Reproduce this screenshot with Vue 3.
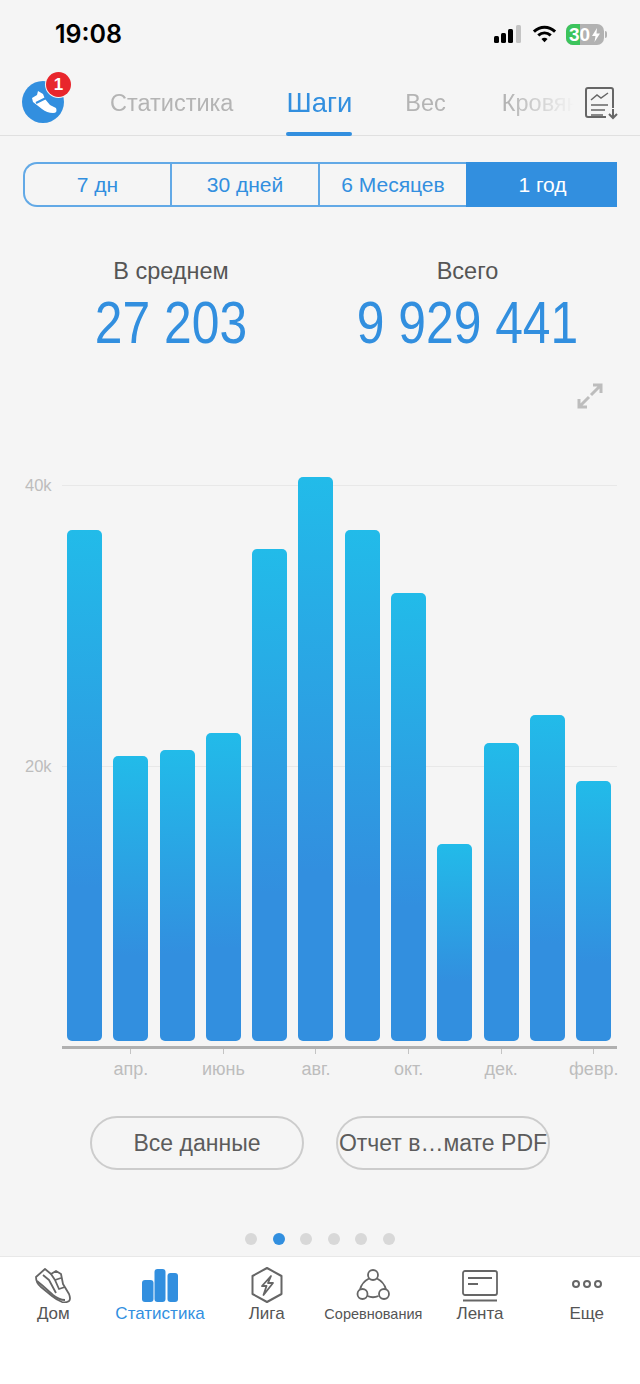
<template>
  <div class="screen">
    <div class="status">
      <span class="time">19:08</span>
      <div class="status-icons">
        <svg width="30" height="20" viewBox="0 0 30 20">
          <rect x="1" y="12" width="5" height="7" rx="1.500" fill="#000" />
          <rect x="8" y="9" width="5" height="10" rx="1.500" fill="#000" />
          <rect x="15" y="5" width="5" height="14" rx="1.500" fill="#000" />
          <rect x="23" y="1" width="5" height="18" rx="1.500" fill="#c4c4c4" />
        </svg>
        <svg width="25" height="20" viewBox="0 0 26 20" fill="none" stroke="#000" stroke-width="3.200">
          <path d="M2 7.500C8.500 1.500 17.500 1.500 24 7.500" />
          <path d="M6.500 11.500C10.500 8 15.500 8 19.500 11.500" />
          <path d="M13 18.500L9.800 15.200C11.800 13.600 14.200 13.600 16.200 15.200Z" fill="#000" stroke="none" />
        </svg>
        <div class="battery-wrap">
          <div class="battery">
            <div class="battery-fill"></div>
            <span class="battery-num">30</span>
            <svg class="bolt" width="10" height="16" viewBox="0 0 10 16"><path d="M6 1L1 9h3.500L3.500 15 9 6.500H5.500Z" fill="#fff" /></svg>
          </div>
          <i class="battery-nub"></i>
        </div>
      </div>
    </div>

    <div class="header">
      <div class="avatar">
        <svg width="44" height="46" viewBox="0 0 44 46">
          <circle cx="21" cy="25" r="21" fill="#328fdf" />
          <path d="M10 21l5-3 1-4 5 3 2 5 5 6 6 3q2 5-3 5-6 0-11-4l-9-7z" fill="#fff" />
          <path d="M14 26l10-5" stroke="#328fdf" stroke-width="2" fill="none" />
        </svg>
        <span class="badge">1</span>
      </div>
      <div class="tabs">
        <span v-for="t in tabs" :key="t" class="tab" :class="{ active: t === 'Шаги' }">{{ t }}</span>
      </div>
      <svg class="report" width="36" height="36" viewBox="0 0 36 36" fill="none" stroke="#666" stroke-width="2">
        <path d="M22 31H4a2 2 0 0 1-2-2V4a2 2 0 0 1 2-2h23a2 2 0 0 1 2 2v18" />
        <path d="M7 14l6-5 4 3 7-5" stroke-width="1.500" />
        <path d="M7 19h17M7 24h14M7 29h12" stroke-width="1.500" />
        <path d="M29 23v9M25 28l4 4 4-4" />
      </svg>
    </div>

    <div class="segments">
      <div v-for="s in ranges" :key="s" class="segment" :class="{ on: s === '1 год' }">{{ s }}</div>
    </div>

    <div class="stats">
      <div class="stat">
        <div class="stat-label">В среднем</div>
        <div class="stat-value">27 203</div>
      </div>
      <div class="stat">
        <div class="stat-label">Всего</div>
        <div class="stat-value">9 929 441</div>
      </div>
    </div>

    <div class="expand-row">
      <svg width="28" height="28" viewBox="0 0 28 28" fill="none" stroke="#bdbdbd" stroke-width="3">
        <path d="M17 3h8v8M25 3L15 13" />
        <path d="M11 25H3v-8M3 25l10-10" />
      </svg>
    </div>

    <div class="chart">
      <div class="grid-line first"><span>40k</span></div>
      <div class="grid-line second"><span>20k</span></div>
      <div class="bars">
        <div v-for="(h, i) in bars" :key="i" class="bar" :style="{ height: h + 'px' }"></div>
      </div>
      <div class="axis"></div>
      <div class="months">
        <div v-for="(m, i) in months" :key="i" class="month">
          <template v-if="m">
            <i class="tick"></i>
            <span>{{ m }}</span>
          </template>
        </div>
      </div>
    </div>

    <div class="actions">
      <div class="pill">Все данные</div>
      <div class="pill">Отчет в…мате PDF</div>
    </div>

    <div class="dots">
      <i v-for="n in 6" :key="n" class="dot" :class="{ current: n === 2 }"></i>
    </div>

    <div class="nav">
      <div class="nav-item">
        <svg width="36" height="36" viewBox="0 0 36 36" fill="none" stroke="#666" stroke-width="1.800" stroke-linejoin="round">
          <path d="M1 10L10 2l6 5 5-3 5 3 2 10 6 10q2 5 0 7-3 2-7 1-5-2-10-6L6 20Q1 16 1 10z" />
          <path d="M2 14l6 5 10 9q6 5 12 5" />
          <path d="M16 7l4 6 6-2M20 13l4 9 6-2" />
          <path d="M8 8l6 5 7 13" />
        </svg>
        <span>Дом</span>
      </div>
      <div class="nav-item active">
        <svg width="36" height="36" viewBox="0 0 36 36" fill="#328fdf">
          <rect x="0" y="13" width="11.500" height="22" rx="3" />
          <rect x="12.500" y="2" width="11" height="33" rx="3" />
          <rect x="25.500" y="6" width="10.500" height="29" rx="3" />
        </svg>
        <span>Статистика</span>
      </div>
      <div class="nav-item">
        <svg width="36" height="36" viewBox="0 0 36 36" fill="none" stroke="#666" stroke-width="2" stroke-linejoin="round">
          <path d="M18 1l14.500 8v18L18 35 3.500 27V9z" />
          <path d="M22 9l-9 10h4.500l-3 9 9.500-12h-5z" stroke-width="1.800" />
        </svg>
        <span>Лига</span>
      </div>
      <div class="nav-item">
        <svg width="36" height="36" viewBox="0 0 36 36" fill="none" stroke="#666" stroke-width="1.800">
          <circle cx="18" cy="8" r="5" />
          <circle cx="7.500" cy="27" r="5" />
          <circle cx="29" cy="27" r="5" />
          <path d="M14 11.500Q7 15 5 22.500M22 11.500q7 3.500 9 11M12.500 29q5.500 2.500 11 0" />
        </svg>
        <span class="tight">Соревнования</span>
      </div>
      <div class="nav-item">
        <svg width="36" height="36" viewBox="0 0 36 36" fill="none" stroke="#666" stroke-width="1.800">
          <rect x="1" y="4" width="34" height="24" rx="2" />
          <path d="M6 11h24M6 17h10M1 33.500h34" />
        </svg>
        <span>Лента</span>
      </div>
      <div class="nav-item">
        <svg width="36" height="36" viewBox="0 0 36 36" fill="none" stroke="#666" stroke-width="2">
          <circle cx="7" cy="17" r="3" />
          <circle cx="18" cy="17" r="3" />
          <circle cx="29" cy="17" r="3" />
        </svg>
        <span>Еще</span>
      </div>
    </div>
  </div>
</template>

<script setup>
const tabs = ['Статистика', 'Шаги', 'Вес', 'Кровяное давление'];
const ranges = ['7 дн', '30 дней', '6 Месяцев', '1 год'];

// высота столбцов в px, низ графика 1041
const bars = [511, 285, 291, 308, 492, 564, 511, 448, 197, 298, 326, 260];
const months = ['', 'апр.', '', 'июнь', '', 'авг.', '', 'окт.', '', 'дек.', '', 'февр.'];
</script>

<style>
body {
  margin: 0;
  background: #f5f5f5;
}
</style>

<style scoped>
.screen {
  width: 640px;
  height: 1384px;
  overflow: hidden;
  background: #f5f5f5;
  display: flex;
  flex-direction: column;
  font-family: "Liberation Sans", Arial, sans-serif;
}

.status {
  height: 70px;
  padding: 19px 33px 0 55px;
  box-sizing: border-box;
  display: flex;
  justify-content: space-between;
  align-items: flex-start;
}

.time {
  font-family: Inter, sans-serif;
  font-size: 25px;
  font-weight: 600;
  line-height: 30px;
  color: #000;
}

.status-icons {
  display: flex;
  align-items: center;
  gap: 9px;
  height: 30px;
}

.battery-wrap {
  display: flex;
  align-items: center;
  gap: 1px;
}

.battery {
  position: relative;
  width: 38px;
  height: 21px;
  border-radius: 7px;
  background: #b2b2b2;
  overflow: hidden;
}

.battery-nub {
  width: 2px;
  height: 7px;
  border-radius: 0 2px 2px 0;
  background: #b2b2b2;
}

.battery-fill {
  width: 14px;
  height: 21px;
  background: #3cc45c;
}

.battery-num {
  position: absolute;
  left: 3px;
  top: 0;
  font-size: 19px;
  line-height: 21px;
  font-weight: 700;
  color: #fff;
}

.bolt {
  position: absolute;
  right: 3px;
  top: 3px;
}

.header {
  height: 66px;
  box-sizing: border-box;
  border-bottom: 1px solid #e0e0e0;
  display: flex;
  align-items: flex-start;
  position: relative;
}

.avatar {
  position: relative;
  width: 44px;
  height: 46px;
  margin: 7px 0 0 22px;
  flex: none;
}

.badge {
  position: absolute;
  left: 24px;
  top: -5px;
  width: 25px;
  height: 25px;
  border-radius: 50%;
  background: #e8262c;
  box-shadow: 0 0 0 1px #f5f5f5;
  color: #fff;
  font-size: 17px;
  font-weight: 700;
  line-height: 25px;
  text-align: center;
}

.tabs {
  margin-left: 44px;
  width: 474px;
  flex: none;
  display: flex;
  gap: 53px;
  overflow: hidden;
  white-space: nowrap;
  height: 66px;
  -webkit-mask-image: linear-gradient(to right, #000 84%, transparent 98%);
  mask-image: linear-gradient(to right, #000 84%, transparent 98%);
}

.tab {
  font-size: 23.500px;
  line-height: 66px;
  color: #b4b4b4;
  height: 65px;
  position: relative;
  flex: none;
}

.tab:last-child {
  margin-left: 3px;
}

.tab.active {
  color: #328fdf;
  font-size: 27.500px;
}

.tab.active::after {
  content: "";
  position: absolute;
  left: 0;
  right: 0;
  bottom: -1px;
  height: 4px;
  border-radius: 2px;
  background: #328fdf;
}

.report {
  position: absolute;
  left: 584px;
  top: 16px;
}

.segments {
  margin: 26px 23px 0;
  height: 45px;
  display: grid;
  grid-template-columns: 147px 148px 148px 1fr;
}

.segment {
  box-sizing: border-box;
  text-align: center;
  line-height: 41px;
  font-size: 21px;
  color: #328fdf;
  border: 2px solid #62a9e6;
  border-right: 0;
}

.segment:first-child {
  border-radius: 14px 0 0 14px;
}

.segment.on {
  background: #328fdf;
  border-color: #328fdf;
  color: #fff;
}

.stats {
  display: flex;
  margin-top: 51px;
  padding: 0 23px;
}

.stat {
  text-align: center;
}

.stat:first-child {
  width: 296px;
}

.stat:last-child {
  width: 297px;
}

.stat-label {
  font-size: 23.500px;
  line-height: 26px;
  color: #555;
}

.stat-value {
  font-size: 60px;
  line-height: 66px;
  margin-top: 6px;
  color: #328fdf;
  transform: scaleX(0.83);
  white-space: nowrap;
}

.expand-row {
  display: flex;
  justify-content: flex-end;
  padding-right: 36px;
  margin-top: 26px;
}

.chart {
  position: relative;
  margin: 39px 23px 0 62px;
  height: 667px;
}

.grid-line {
  position: absolute;
  left: 0;
  right: 0;
  height: 1px;
  background: #e8e8e8;
}

.grid-line.first {
  top: 36px;
}

.grid-line.second {
  top: 317px;
}

.grid-line span {
  position: absolute;
  left: -37px;
  top: -10px;
  font-size: 16.500px;
  line-height: 20px;
  color: #bdbdbd;
}

.bars {
  position: relative;
  height: 592px;
  display: flex;
  align-items: flex-end;
  gap: 11.300px;
  padding-left: 5px;
}

.bar {
  width: 35px;
  flex: none;
  border-radius: 5px;
  background: linear-gradient(to bottom, #22bbe9, #328fdf 70%);
}

.axis {
  margin-top: 5px;
  height: 3px;
  background: #b0b0b0;
}

.months {
  display: flex;
  gap: 11.300px;
  padding-left: 5px;
}

.month {
  width: 35px;
  flex: none;
  display: flex;
  flex-direction: column;
  align-items: center;
  white-space: nowrap;
  font-size: 18px;
  color: #bdbdbd;
}

.tick {
  width: 1px;
  height: 5px;
  background: #c4c4c4;
  flex: none;
}

.month span {
  margin-top: 4px;
  line-height: 22px;
}

.actions {
  display: flex;
  justify-content: center;
  gap: 32px;
}

.pill {
  width: 214px;
  height: 54px;
  box-sizing: border-box;
  border: 2px solid #cccccc;
  border-radius: 27px;
  text-align: center;
  line-height: 51px;
  font-size: 23px;
  color: #5c5c5c;
  white-space: nowrap;
}

.dots {
  display: flex;
  justify-content: center;
  align-items: center;
  gap: 15.500px;
  margin-top: 63px;
  height: 12px;
}

.dot {
  width: 12px;
  height: 12px;
  border-radius: 50%;
  background: #d8d8d8;
}

.dot.current {
  background: #328fdf;
}

.nav {
  margin-top: 11px;
  flex: 1;
  background: #fff;
  border-top: 1px solid #e8e8e8;
  display: flex;
  padding-top: 10px;
}

.nav-item {
  flex: 1;
  display: flex;
  flex-direction: column;
  align-items: center;
  font-size: 17px;
  line-height: 18px;
  color: #555;
  white-space: nowrap;
}

.nav-item svg {
  margin-bottom: 2px;
}

.nav-item .tight {
  font-size: 14.500px;
}

.nav-item.active {
  color: #328fdf;
}
</style>
